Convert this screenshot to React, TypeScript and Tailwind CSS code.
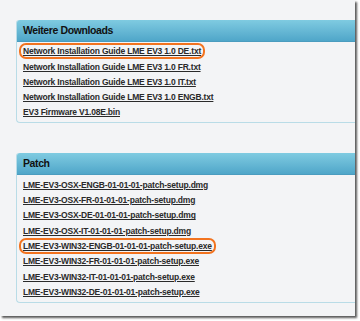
import React from "react";

const downloads = [
  "Network Installation Guide LME EV3 1.0 DE.txt",
  "Network Installation Guide LME EV3 1.0 FR.txt",
  "Network Installation Guide LME EV3 1.0 IT.txt",
  "Network Installation Guide LME EV3 1.0 ENGB.txt",
  "EV3 Firmware V1.08E.bin",
];

const patches = [
  "LME-EV3-OSX-ENGB-01-01-01-patch-setup.dmg",
  "LME-EV3-OSX-FR-01-01-01-patch-setup.dmg",
  "LME-EV3-OSX-DE-01-01-01-patch-setup.dmg",
  "LME-EV3-OSX-IT-01-01-01-patch-setup.dmg",
  "LME-EV3-WIN32-ENGB-01-01-01-patch-setup.exe",
  "LME-EV3-WIN32-FR-01-01-01-patch-setup.exe",
  "LME-EV3-WIN32-IT-01-01-01-patch-setup.exe",
  "LME-EV3-WIN32-DE-01-01-01-patch-setup.exe",
];

const highlighted = [
  "Network Installation Guide LME EV3 1.0 DE.txt",
  "LME-EV3-WIN32-ENGB-01-01-01-patch-setup.exe",
];

const Panel: React.FC<{ title: string; files: string[]; className?: string }> = ({
  title,
  files,
  className,
}) => (
  <div
    className={`ml-[16px] border-l border-b border-[#b9dce7] rounded-tl-[3px] rounded-bl-[4px] ${className ?? ""}`}
  >
    {/* Header */}
    <div className="h-[22px] flex items-center pl-[6px] rounded-tl-[3px] bg-gradient-to-b from-[#7fcbe1] to-[#4fa6c9] border-b border-[#4a9cbf]">
      <span className="text-[10.5px] tracking-[-0.4px] font-bold text-[#111]">{title}</span>
    </div>

    {/* Links */}
    <div className="pt-[2px] pb-[2px] pl-[6px]">
      {files.map((file) => (
        <div key={file} className="h-[15.3px] flex items-center">
          <span className="relative text-[8.5px] tracking-[-0.2px] font-bold text-[#2a2a2a] underline underline-offset-[1px]">
            {file}
            {highlighted.includes(file) && (
              <span className="absolute -left-[4px] -right-[4px] -top-[2px] -bottom-[1px] rounded-[7px] border-2 border-[#f2731f]" />
            )}
          </span>
        </div>
      ))}
    </div>
  </div>
);

export default function App() {
  return (
    <div
      className="w-[360px] h-[321px] bg-white"
      style={{ fontFamily: '"Liberation Sans", Arial, sans-serif' }}
    >
      <div className="w-[355px] h-[316px] bg-[#f3f4f6] overflow-hidden pt-[20px] shadow-[2px_2px_2px_rgba(0,0,0,0.65)]">
        <Panel title="Weitere Downloads" files={downloads} />
        <Panel title="Patch" files={patches} className="mt-[30px]" />
      </div>
    </div>
  );
}
